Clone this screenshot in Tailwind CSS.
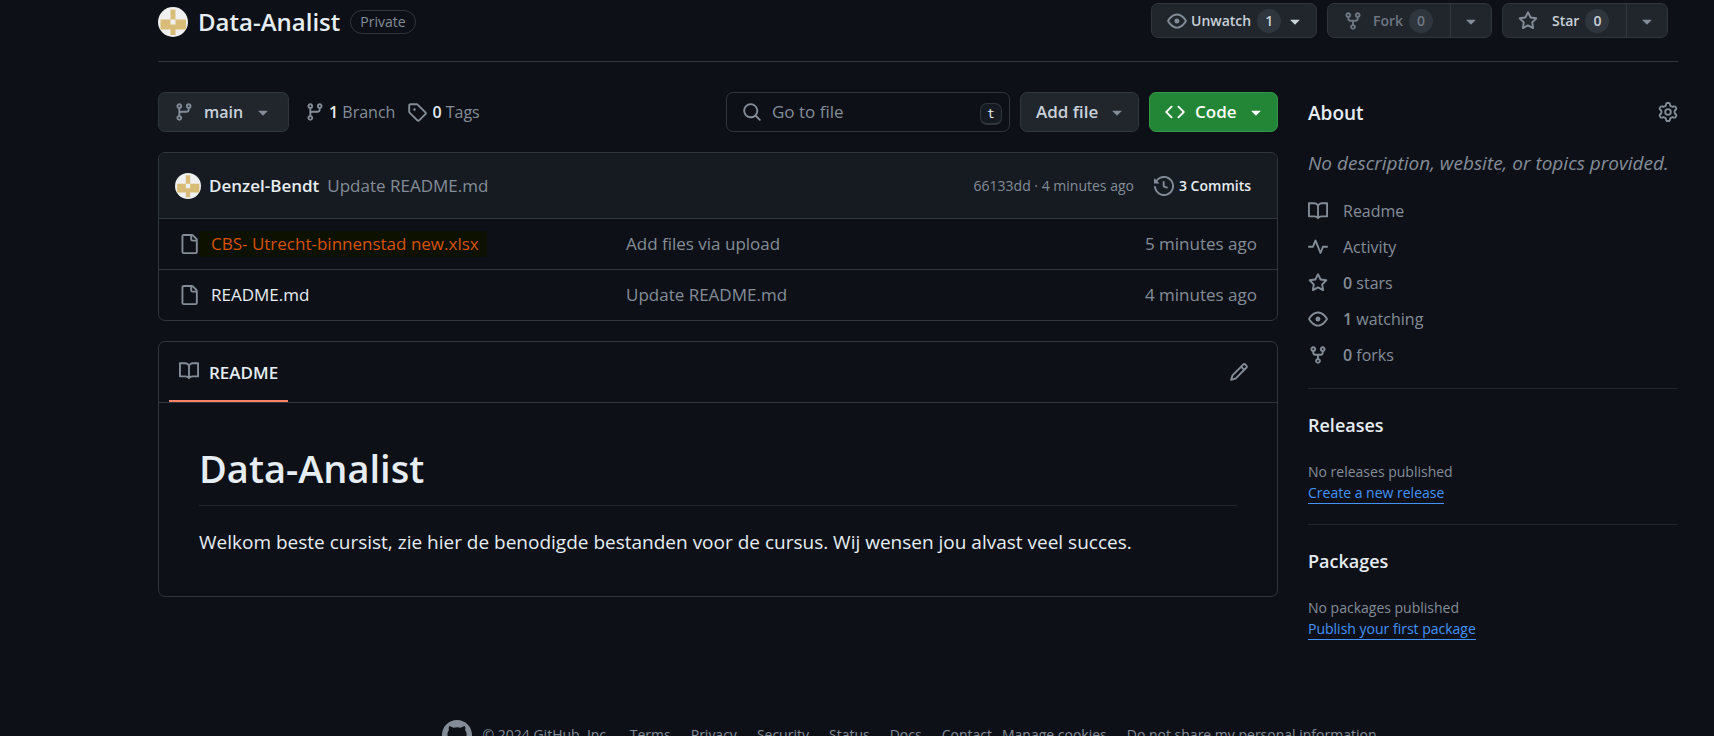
<!DOCTYPE html>
<html lang="en">
<head>
<meta charset="utf-8">
<title>Data-Analist</title>
<script src="https://cdn.jsdelivr.net/npm/@tailwindcss/browser@4"></script>
</head>
<body class="h-screen overflow-hidden bg-[#0d1117] font-['Open_Sans',sans-serif] text-base text-[#e6edf3]">
<svg class="hidden" aria-hidden="true">
  <symbol id="branch" viewBox="0 0 16 16"><path d="M9.5 3.25a2.25 2.25 0 1 1 3 2.122V6A2.5 2.5 0 0 1 10 8.5H6a1 1 0 0 0-1 1v1.128a2.251 2.251 0 1 1-1.5 0V5.372a2.25 2.25 0 1 1 1.5 0v1.836A2.493 2.493 0 0 1 6 7h4a1 1 0 0 0 1-1v-.628A2.25 2.25 0 0 1 9.5 3.25Zm-6 0a.75.75 0 1 0 1.5 0 .75.75 0 0 0-1.5 0Zm8.25-.75a.75.75 0 1 0 0 1.5.75.75 0 0 0 0-1.5ZM4.25 12a.75.75 0 1 0 0 1.5.75.75 0 0 0 0-1.5Z"/></symbol>
  <symbol id="tag" viewBox="0 0 16 16"><path d="M1 7.775V2.75C1 1.784 1.784 1 2.75 1h5.025c.464 0 .91.184 1.238.513l6.25 6.25a1.75 1.75 0 0 1 0 2.474l-5.026 5.026a1.75 1.75 0 0 1-2.474 0l-6.25-6.25A1.752 1.752 0 0 1 1 7.775Zm1.5 0c0 .066.026.13.073.177l6.25 6.25a.25.25 0 0 0 .354 0l5.025-5.025a.25.25 0 0 0 0-.354l-6.25-6.25a.25.25 0 0 0-.177-.073H2.75a.25.25 0 0 0-.25.25ZM6 5a1 1 0 1 1 0 2 1 1 0 0 1 0-2Z"/></symbol>
  <symbol id="eye" viewBox="0 0 16 16"><path d="M8 2c1.981 0 3.671.992 4.933 2.078 1.27 1.091 2.187 2.345 2.637 3.023a1.62 1.62 0 0 1 0 1.798c-.45.678-1.367 1.932-2.637 3.023C11.67 13.008 9.981 14 8 14c-1.981 0-3.671-.992-4.933-2.078C1.797 10.83.88 9.576.43 8.898a1.62 1.62 0 0 1 0-1.798c.45-.677 1.367-1.931 2.637-3.022C4.33 2.992 6.019 2 8 2ZM1.679 7.932a.12.12 0 0 0 0 .136c.411.622 1.241 1.75 2.366 2.717C5.176 11.758 6.527 12.5 8 12.5c1.473 0 2.825-.742 3.955-1.715 1.124-.967 1.954-2.096 2.366-2.717a.12.12 0 0 0 0-.136c-.412-.621-1.242-1.75-2.366-2.717C10.824 4.242 9.473 3.5 8 3.5c-1.473 0-2.825.742-3.955 1.715-1.124.967-1.954 2.096-2.366 2.717ZM8 10a2 2 0 1 1-.001-3.999A2 2 0 0 1 8 10Z"/></symbol>
  <symbol id="fork" viewBox="0 0 16 16"><path d="M5 5.372v.878c0 .414.336.75.75.75h4.5a.75.75 0 0 0 .75-.75v-.878a2.25 2.25 0 1 1 1.5 0v.878a2.25 2.25 0 0 1-2.25 2.25h-1.5v2.128a2.251 2.251 0 1 1-1.5 0V8.5h-1.5A2.25 2.25 0 0 1 3.5 6.25v-.878a2.25 2.25 0 1 1 1.5 0ZM5 3.25a.75.75 0 1 0-1.5 0 .75.75 0 0 0 1.5 0Zm6.75.75a.75.75 0 1 0 0-1.5.75.75 0 0 0 0 1.5Zm-3 8.75a.75.75 0 1 0-1.5 0 .75.75 0 0 0 1.5 0Z"/></symbol>
  <symbol id="star" viewBox="0 0 16 16"><path d="M8 .25a.75.75 0 0 1 .673.418l1.882 3.815 4.21.612a.75.75 0 0 1 .416 1.279l-3.046 2.97.719 4.192a.751.751 0 0 1-1.088.791L8 12.347l-3.766 1.98a.75.75 0 0 1-1.088-.79l.72-4.194L.818 6.374a.75.75 0 0 1 .416-1.28l4.21-.611L7.327.668A.75.75 0 0 1 8 .25Zm0 2.445L6.615 5.5a.75.75 0 0 1-.564.41l-3.097.45 2.24 2.184a.75.75 0 0 1 .216.664l-.528 3.084 2.769-1.456a.75.75 0 0 1 .698 0l2.77 1.456-.53-3.084a.75.75 0 0 1 .216-.664l2.24-2.183-3.096-.45a.75.75 0 0 1-.564-.41L8 2.694Z"/></symbol>
  <symbol id="caret" viewBox="0 0 16 16"><path d="m4.427 7.427 3.396 3.396a.25.25 0 0 0 .354 0l3.396-3.396A.25.25 0 0 0 11.396 7H4.604a.25.25 0 0 0-.177.427Z"/></symbol>
  <symbol id="search" viewBox="0 0 16 16"><path d="M10.68 11.74a6 6 0 0 1-7.922-8.982 6 6 0 0 1 8.982 7.922l3.04 3.04a.749.749 0 0 1-.326 1.275.749.749 0 0 1-.734-.215ZM11.5 7a4.499 4.499 0 1 0-8.997 0A4.499 4.499 0 0 0 11.5 7Z"/></symbol>
  <symbol id="code" viewBox="0 0 16 16"><path d="m11.28 3.22 4.25 4.25a.75.75 0 0 1 0 1.06l-4.25 4.25a.749.749 0 0 1-1.275-.326.749.749 0 0 1 .215-.734L13.94 8l-3.72-3.72a.749.749 0 0 1 .326-1.275.749.749 0 0 1 .734.215Zm-6.56 0a.751.751 0 0 1 1.042.018.751.751 0 0 1 .018 1.042L2.06 8l3.72 3.72a.749.749 0 0 1-.326 1.275.749.749 0 0 1-.734-.215L.47 8.53a.75.75 0 0 1 0-1.06Z"/></symbol>
  <symbol id="gear" viewBox="0 0 16 16"><path d="M8 0a8.2 8.2 0 0 1 .701.031C9.444.095 9.99.645 10.16 1.29l.288 1.107c.018.066.079.158.212.224.231.114.454.243.668.386.123.082.233.09.299.071l1.103-.303c.644-.176 1.392.021 1.82.63.27.385.506.792.704 1.218.315.675.111 1.422-.364 1.891l-.814.806c-.049.048-.098.147-.088.294.016.257.016.515 0 .772-.01.147.038.246.088.294l.814.806c.475.469.679 1.216.364 1.891a7.977 7.977 0 0 1-.704 1.217c-.428.61-1.176.807-1.82.63l-1.102-.302c-.067-.019-.177-.011-.3.071a5.909 5.909 0 0 1-.668.386c-.133.066-.194.158-.211.224l-.29 1.106c-.168.646-.715 1.196-1.458 1.26a8.006 8.006 0 0 1-1.402 0c-.743-.064-1.289-.614-1.458-1.26l-.289-1.106c-.018-.066-.079-.158-.212-.224a5.738 5.738 0 0 1-.668-.386c-.123-.082-.233-.09-.299-.071l-1.103.303c-.644.176-1.392-.021-1.82-.63a8.12 8.12 0 0 1-.704-1.218c-.315-.675-.111-1.422.363-1.891l.815-.806c.05-.048.098-.147.088-.294a6.214 6.214 0 0 1 0-.772c.01-.147-.038-.246-.088-.294l-.815-.806C.635 6.045.431 5.298.746 4.623a7.92 7.92 0 0 1 .704-1.217c.428-.61 1.176-.807 1.82-.63l1.102.302c.067.019.177.011.3-.071.214-.143.437-.272.668-.386.133-.066.194-.158.211-.224l.29-1.106C6.009.645 6.556.095 7.299.03 7.53.01 7.764 0 8 0Zm-.571 1.525c-.036.003-.108.036-.137.146l-.289 1.105c-.147.561-.549.967-.998 1.189-.173.086-.34.183-.5.29-.417.278-.97.423-1.529.27l-1.103-.303c-.109-.03-.175.016-.195.045-.22.312-.412.644-.573.99-.014.031-.021.11.059.19l.815.806c.411.406.562.957.53 1.456a4.709 4.709 0 0 0 0 .582c.032.499-.119 1.05-.53 1.456l-.815.806c-.081.08-.073.159-.059.19.162.346.353.677.573.989.02.03.085.076.195.046l1.102-.303c.56-.153 1.113-.008 1.53.27.161.107.328.204.501.29.447.222.85.629.997 1.189l.289 1.105c.029.109.101.143.137.146a6.6 6.6 0 0 0 1.142 0c.036-.003.108-.036.137-.146l.289-1.105c.147-.561.549-.967.998-1.189.173-.086.34-.183.5-.29.417-.278.97-.423 1.529-.27l1.103.303c.109.029.175-.016.195-.045.22-.313.411-.644.573-.99.014-.031.021-.11-.059-.19l-.815-.806c-.411-.406-.562-.957-.53-1.456a4.709 4.709 0 0 0 0-.582c-.032-.499.119-1.05.53-1.456l.815-.806c.081-.08.073-.159.059-.19a6.464 6.464 0 0 0-.573-.989c-.02-.03-.085-.076-.195-.046l-1.102.303c-.56.153-1.113.008-1.53-.27a4.44 4.44 0 0 0-.501-.29c-.447-.222-.85-.629-.997-1.189l-.289-1.105c-.029-.11-.101-.143-.137-.146a6.6 6.6 0 0 0-1.142 0ZM11 8a3 3 0 1 1-6 0 3 3 0 0 1 6 0ZM9.5 8a1.5 1.5 0 1 0-3.001.001A1.5 1.5 0 0 0 9.5 8Z"/></symbol>
  <symbol id="history" viewBox="0 0 16 16"><path d="m.427 1.927 1.215 1.215a8.002 8.002 0 1 1-1.6 5.685.75.75 0 1 1 1.493-.154 6.5 6.5 0 1 0 1.18-4.458l1.358 1.358A.25.25 0 0 1 3.896 6H.25A.25.25 0 0 1 0 5.75V2.104a.25.25 0 0 1 .427-.177ZM7.75 4a.75.75 0 0 1 .75.75v2.992l2.028.812a.75.75 0 0 1-.557 1.392l-2.5-1A.751.751 0 0 1 7 8.25v-3.5A.75.75 0 0 1 7.75 4Z"/></symbol>
  <symbol id="file" viewBox="0 0 16 16"><path d="M2 1.75C2 .784 2.784 0 3.75 0h6.586c.464 0 .909.184 1.237.513l2.914 2.914c.329.328.513.773.513 1.237v9.586A1.75 1.75 0 0 1 13.25 16h-9.5A1.75 1.75 0 0 1 2 14.25Zm1.75-.25a.25.25 0 0 0-.25.25v12.5c0 .138.112.25.25.25h9.5a.25.25 0 0 0 .25-.25V6h-2.75A1.75 1.75 0 0 1 9 4.25V1.5Zm6.75.062V4.25c0 .138.112.25.25.25h2.688l-.011-.013-2.914-2.914-.013-.011Z"/></symbol>
  <symbol id="book" viewBox="0 0 16 16"><path d="M0 1.75A.75.75 0 0 1 .75 1h4.253c1.227 0 2.317.59 3 1.501A3.743 3.743 0 0 1 11.006 1h4.245a.75.75 0 0 1 .75.75v10.5a.75.75 0 0 1-.75.75h-4.507a2.25 2.25 0 0 0-1.591.659l-.622.621a.75.75 0 0 1-1.06 0l-.622-.621A2.25 2.25 0 0 0 5.258 13H.75a.75.75 0 0 1-.75-.75Zm7.251 10.324.004-5.073-.002-2.253A2.25 2.25 0 0 0 5.003 2.5H1.5v9h3.757a3.75 3.75 0 0 1 1.994.574ZM8.755 4.75l-.004 7.322a3.752 3.752 0 0 1 1.992-.572H14.5v-9h-3.495a2.25 2.25 0 0 0-2.25 2.25Z"/></symbol>
  <symbol id="pulse" viewBox="0 0 16 16"><path d="M6 2c.306 0 .582.187.696.471L10 10.731l1.304-3.26A.751.751 0 0 1 12 7h3.25a.75.75 0 0 1 0 1.5h-2.742l-1.812 4.528a.751.751 0 0 1-1.392 0L6 4.77 4.696 8.03A.75.75 0 0 1 4 8.5H.75a.75.75 0 0 1 0-1.5h2.742l1.812-4.529A.751.751 0 0 1 6 2Z"/></symbol>
  <symbol id="pencil" viewBox="0 0 16 16"><path d="M11.013 1.427a1.75 1.75 0 0 1 2.474 0l1.086 1.086a1.75 1.75 0 0 1 0 2.474l-8.61 8.61c-.21.21-.47.364-.756.445l-3.251.93a.75.75 0 0 1-.927-.928l.929-3.25c.081-.286.235-.547.445-.758l8.61-8.61Zm.176 4.823L9.75 4.81l-6.286 6.287a.253.253 0 0 0-.064.108l-.558 1.953 1.953-.558a.253.253 0 0 0 .108-.064Zm1.238-3.763a.25.25 0 0 0-.354 0L10.811 3.75l1.439 1.44 1.263-1.263a.25.25 0 0 0 0-.354Z"/></symbol>
  <symbol id="mark" viewBox="0 0 16 16"><path d="M8 0c4.42 0 8 3.58 8 8a8.013 8.013 0 0 1-5.45 7.59c-.4.08-.55-.17-.55-.38 0-.27.01-1.13.01-2.2 0-.75-.25-1.23-.54-1.48 1.78-.2 3.65-.88 3.65-3.95 0-.88-.31-1.59-.82-2.15.08-.2.36-1.02-.08-2.12 0 0-.67-.22-2.2.82-.64-.18-1.32-.27-2-.27-.68 0-1.36.09-2 .27-1.53-1.03-2.2-.82-2.2-.82-.44 1.1-.16 1.92-.08 2.12-.51.56-.82 1.28-.82 2.15 0 3.06 1.86 3.75 3.64 3.95-.23.2-.44.55-.51 1.07-.46.21-1.61.55-2.33-.66-.15-.24-.6-.83-1.23-.82-.67.01-.27.38.01.53.34.19.73.9.82 1.13.16.45.68 1.31 2.69.94 0 .67.01 1.3.01 1.49 0 .21-.15.45-.55.38A7.995 7.995 0 0 1 0 8c0-4.42 3.58-8 8-8Z"/></symbol>
  <symbol id="avatar" viewBox="0 0 30 30"><circle cx="15" cy="15" r="15" fill="#f0f0f0"/><path fill="#d9bc78" d="M12.500 2.500h5v10h10.500v10h-10.500v5.500h-5v-5.500h-10v-10h10z"/><path fill="#f0f0f0" d="M12.500 12.500h5v5h-5z"/></symbol>
</svg>

<div class="pl-[158px] pr-9">
  <header class="flex h-[62px] items-start justify-between border-b border-[#30363d] pr-[10px]">
    <div class="flex items-center gap-[10px] pt-1">
      <svg class="size-[30px]"><use href="#avatar"/></svg>
      <h1 class="text-2xl leading-9 font-semibold">Data-Analist</h1>
      <span class="rounded-full border border-[#30363d] px-[9px] text-sm leading-[22px] font-medium text-[#848d97]">Private</span>
    </div>
    <div class="flex gap-[10px] pt-[3px] text-sm font-semibold text-[#c9d1d9]">
      <button class="flex h-[35px] w-[166px] items-center rounded-[7px] border border-[#30363d] bg-[#21262d] pl-[15px]">
        <svg class="size-5 fill-[#848d97]"><use href="#eye"/></svg>
        <span class="ml-1">Unwatch</span>
        <span class="ml-[6px] flex size-6 items-center justify-center rounded-full bg-[#30363d]">1</span>
        <svg class="ml-1 size-5 fill-[#c9d1d9]"><use href="#caret"/></svg>
      </button>
      <div class="flex h-[35px] w-[165px] rounded-[7px] border border-[#30363d] bg-[#21262d] text-[#6e7681]">
        <button class="flex flex-1 items-center pl-[15px]">
          <svg class="size-5 fill-[#6e7681]"><use href="#fork"/></svg>
          <span class="ml-[10px]">Fork</span>
          <span class="ml-[6px] flex size-6 items-center justify-center rounded-full bg-[#30363d]">0</span>
        </button>
        <button aria-label="Fork options" class="flex w-[41px] items-center justify-center border-l border-[#30363d]"><svg class="size-5 fill-[#848d97]"><use href="#caret"/></svg></button>
      </div>
      <div class="flex h-[35px] w-[166px] rounded-[7px] border border-[#30363d] bg-[#21262d]">
        <button class="flex flex-1 items-center pl-[15px]">
          <svg class="size-5 fill-[#848d97]"><use href="#star"/></svg>
          <span class="ml-[14px]">Star</span>
          <span class="ml-[6px] flex size-6 items-center justify-center rounded-full bg-[#30363d]">0</span>
        </button>
        <button aria-label="Star options" class="flex w-[41px] items-center justify-center border-l border-[#30363d]"><svg class="size-5 fill-[#848d97]"><use href="#caret"/></svg></button>
      </div>
    </div>
  </header>

  <div class="flex gap-[30px] pt-[30px]">
    <main class="min-w-0 flex-1">
      <div class="flex h-10 items-center text-[17px]">
        <button class="flex h-10 w-[131px] items-center rounded-[7px] border border-[#30363d] bg-[#21262d] pl-[15px] text-base font-semibold text-[#c9d1d9]">
          <svg class="size-5 fill-[#848d97]"><use href="#branch"/></svg>
          <span class="ml-[10px]">main</span>
          <svg class="ml-[10px] size-5 fill-[#848d97]"><use href="#caret"/></svg>
        </button>
        <a href="#" class="ml-4 flex items-center gap-1 text-base text-[#848d97]"><svg class="size-5 fill-[#848d97]"><use href="#branch"/></svg><span><b class="font-semibold text-[#e6edf3]">1</b> Branch</span></a>
        <a href="#" class="ml-3 flex items-center gap-[5px] text-base text-[#848d97]"><svg class="size-5 fill-[#848d97]"><use href="#tag"/></svg><span><b class="font-semibold text-[#e6edf3]">0</b> Tags</span></a>
        <label class="ml-auto flex h-10 w-[284px] items-center rounded-[7px] border border-[#30363d] pr-[7px] pl-[15px]">
          <svg class="size-5 shrink-0 fill-[#848d97]"><use href="#search"/></svg>
          <input type="text" aria-label="Go to file" placeholder="Go to file" class="ml-[10px] w-0 flex-1 bg-transparent outline-none placeholder:text-[#848d97]">
          <kbd class="mt-1 flex h-[22px] w-[22px] items-center justify-center rounded-[7px] border border-b-2 border-[#30363d] bg-[#161b22] font-['DejaVu_Sans_Mono',monospace] text-[13px]">t</kbd>
        </label>
        <button class="ml-[10px] flex h-10 w-[119px] items-center rounded-[7px] border border-[#30363d] bg-[#21262d] pl-[15px] font-semibold text-[#c9d1d9]">Add file<svg class="ml-[9px] size-5 fill-[#848d97]"><use href="#caret"/></svg></button>
        <button class="ml-[10px] flex h-10 w-[129px] items-center rounded-[7px] border border-[#359645] bg-[#238636] pl-[15px] font-semibold text-white"><svg class="size-5 fill-white"><use href="#code"/></svg><span class="ml-[10px]">Code</span><svg class="ml-[9px] size-5 fill-white"><use href="#caret"/></svg></button>
      </div>

      <table class="mt-5 block overflow-hidden rounded-[7px] border border-[#30363d] text-[17px] text-[#848d97]">
        <thead class="block bg-[#161b22]">
          <tr class="block"><th class="flex h-[65px] items-center pr-[26px] pl-4 text-left font-normal">
            <svg class="size-[26px]"><use href="#avatar"/></svg>
            <a href="#" class="ml-2 font-semibold text-[#e6edf3]">Denzel-Bendt</a>
            <a href="#" class="ml-2">Update README.md</a>
            <span class="ml-auto text-sm">66133dd · 4 minutes ago</span>
            <a href="#" class="ml-5 flex items-center gap-[5px] text-sm font-semibold text-[#e6edf3]"><svg class="size-5 fill-[#848d97]"><use href="#history"/></svg>3 Commits</a>
          </th></tr>
        </thead>
        <tbody class="block">
          <tr class="flex h-[51px] items-center border-t border-[#30363d] px-5">
            <td class="flex w-[447px] items-center"><svg class="size-5 fill-[#848d97]"><use href="#file"/></svg><a href="#" class="bg-[#0d1100] py-px pr-2 pl-3 leading-6 text-[#d65200]">CBS- Utrecht-binnenstad new.xlsx</a></td>
            <td class="flex-1">Add files via upload</td>
            <td>5 minutes ago</td>
          </tr>
          <tr class="flex h-[51px] items-center border-t border-[#30363d] px-5">
            <td class="flex w-[447px] items-center"><svg class="size-5 fill-[#848d97]"><use href="#file"/></svg><a href="#" class="ml-3 text-[#e6edf3]">README.md</a></td>
            <td class="flex-1">Update README.md</td>
            <td>4 minutes ago</td>
          </tr>
        </tbody>
      </table>

      <section class="mt-5 rounded-[7px] border border-[#30363d]">
        <div class="flex h-[61px] items-center justify-between border-b border-[#30363d] pr-7 pl-[10px]">
          <a href="#" class="flex h-[60px] items-center gap-[10px] border-b-2 border-[#f78166] px-[10px] text-[17px] font-semibold"><svg class="size-5 fill-[#848d97]"><use href="#book"/></svg><span class="pt-1">README</span></a>
          <button aria-label="Edit file"><svg class="size-5 fill-[#848d97]"><use href="#pencil"/></svg></button>
        </div>
        <article class="px-10 pt-10 pb-[38px]">
          <h2 class="border-b border-[#21262d] pb-3 text-[38px] leading-[50px] font-semibold">Data-Analist</h2>
          <p class="mt-[21px] text-[19px] leading-[31px]">Welkom beste cursist, zie hier de benodigde bestanden voor de cursus. Wij wensen jou alvast veel succes.</p>
        </article>
      </section>
    </main>

    <aside class="w-[370px] shrink-0 text-[#848d97]">
      <div class="flex h-10 items-center justify-between">
        <h2 class="pt-0.5 text-[19px] font-semibold text-[#e6edf3]">About</h2>
        <button aria-label="Edit repository details"><svg class="size-5 fill-[#848d97]"><use href="#gear"/></svg></button>
      </div>
      <p class="mt-4 text-[19px] leading-[30px] whitespace-nowrap italic">No description, website, or topics provided.</p>
      <ul class="mt-[15px] text-base leading-9">
        <li><a href="#" class="flex items-center gap-[15px]"><svg class="size-5 fill-[#848d97]"><use href="#book"/></svg>Readme</a></li>
        <li><a href="#" class="flex items-center gap-[15px]"><svg class="size-5 fill-[#848d97]"><use href="#pulse"/></svg>Activity</a></li>
        <li><a href="#" class="flex items-center gap-[15px]"><svg class="size-5 fill-[#848d97]"><use href="#star"/></svg><span><b class="font-semibold">0</b> stars</span></a></li>
        <li><a href="#" class="flex items-center gap-[15px]"><svg class="size-5 fill-[#848d97]"><use href="#eye"/></svg><span><b class="font-semibold">1</b> watching</span></a></li>
        <li><a href="#" class="flex items-center gap-[15px]"><svg class="size-5 fill-[#848d97]"><use href="#fork"/></svg><span><b class="font-semibold">0</b> forks</span></a></li>
      </ul>
      <section class="mt-[15px] border-t border-[#21262d] pt-5 pb-5 text-sm">
        <h2 class="text-lg leading-8 font-semibold text-[#e6edf3]">Releases</h2>
        <p class="mt-[19px] leading-[23px]">No releases published</p>
        <a href="#" class="inline-block border-b border-[#4493f8] leading-5 text-[#4493f8]">Create a new release</a>
      </section>
      <section class="border-t border-[#21262d] pt-5 text-sm">
        <h2 class="text-lg leading-8 font-semibold text-[#e6edf3]">Packages</h2>
        <p class="mt-[19px] leading-[23px]">No packages published</p>
        <a href="#" class="inline-block border-b border-[#4493f8] leading-5 text-[#4493f8]">Publish your first package</a>
      </section>
    </aside>
  </div>
</div>

<footer class="mt-20 flex items-center justify-center gap-5 pl-[104px] text-sm whitespace-nowrap text-[#848d97]">
  <div class="flex items-center gap-[11px]"><svg class="size-[30px] fill-[#848d97]"><use href="#mark"/></svg><span>© 2024 GitHub, Inc.</span></div>
  <a href="#">Terms</a><a href="#">Privacy</a><a href="#">Security</a><a href="#">Status</a><a href="#">Docs</a>
  <span class="flex gap-[10px]"><a href="#">Contact</a><button>Manage cookies</button></span>
  <button>Do not share my personal information</button>
</footer>
</body>
</html>
